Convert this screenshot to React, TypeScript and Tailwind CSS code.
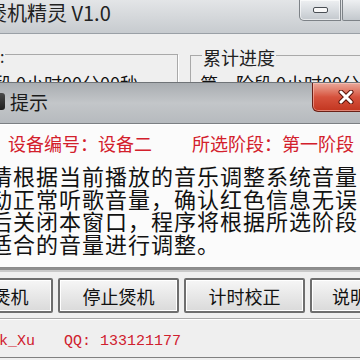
const cjk = "font-['Noto_Sans_CJK_SC','Noto_Sans',sans-serif]"

const MinButton = () => (
  <div className="w-[42px] h-[21px] shrink-0 flex items-center justify-center rounded-bl-[5px] border border-t-0 border-[#7d8287] bg-gradient-to-b from-[#eef0f2] via-[#d9dde1] to-[#c3c8cd] shadow-[inset_0_0_0_1px_rgba(255,255,255,0.6)]">
    <div className="w-[15px] h-[6px] rounded-[2px] border border-[#4a4f55] bg-[#f8f8f8]" />
  </div>
)

const CloseGlyph = () => (
  <svg width="16" height="14" viewBox="0 0 16 14">
    <path d="M3 2 L13 12 M13 2 L3 12" stroke="#5a1208" strokeWidth="5" strokeLinecap="round" />
    <path d="M3 2 L13 12 M13 2 L3 12" stroke="#ffffff" strokeWidth="3" strokeLinecap="round" />
  </svg>
)

const WinButton = ({ label, w = "w-[121px]" }: { label: string; w?: string }) => (
  <div className={`${w} h-[35px] shrink-0 flex items-center justify-center border-2 border-[#6e6e6e] rounded-[2px] bg-gradient-to-b from-[#f6f6f6] to-[#dadada] shadow-[inset_0_0_0_1px_#ffffff] text-[18px] leading-[22px] text-[#111]`}>
    {label}
  </div>
)

const App = () => {
  return (
    <div className={`relative w-[360px] h-[360px] overflow-hidden bg-[#efefef] ${cjk}`}>
      {/* main window */}
      <div className="flex flex-col h-full">
        <div className="h-[34px] shrink-0 flex items-start bg-gradient-to-b from-[#e3e5e7] to-[#c7cbcf] border-b border-[#9aa0a6]">
          <span className="ml-[-13px] mt-[1px] text-[20px] leading-[24px] text-[#222] whitespace-nowrap">煲机精灵 V1.0</span>
          <div className="ml-auto flex gap-[1px] mr-[-24px]">
            <MinButton />
            <div className="w-[42px] h-[21px] shrink-0 rounded-bl-[2px] border border-t-0 border-[#7d8287] bg-gradient-to-b from-[#eef0f2] to-[#c3c8cd]" />
          </div>
        </div>

        <div className="h-[234px] shrink-0 flex items-start">
          <div className="relative mt-[13px] w-[178px] shrink-0">
            <span className="absolute left-[-32px] top-0 text-[16px] leading-[18px] text-[#222]">设置:</span>
            <div className="mt-[7px] ml-[5px] h-[120px] border-t border-r border-[#a9a9a9] shadow-[1px_1px_0_#fff]">
              <div className="ml-[-65px] mt-[17px] text-[18px] leading-[22px] whitespace-nowrap text-[#111]">第一阶段 0小时00分00秒</div>
            </div>
          </div>
          <div className="relative mt-[13px] ml-[12px] flex-1">
            <div className="absolute left-[12px] top-0 bg-[#efefef] px-[1px] text-[18px] leading-[20px] text-[#222]">累计进度</div>
            <div className="mt-[8px] h-[120px] border-t border-l border-[#a9a9a9] mr-[-10px]">
              <div className="ml-[9px] mt-[16px] text-[18px] leading-[22px] whitespace-nowrap text-[#111]">第一阶段 0小时00分00秒</div>
            </div>
          </div>
        </div>

        <div className="h-[4px] shrink-0 border-t-2 border-[#8e8e8e] bg-[#c9c9c9]" />

        <div className="mt-[6px] flex gap-[5px] ml-[-68px]">
          <WinButton label="开始煲机" />
          <WinButton label="停止煲机" />
          <WinButton label="计时校正" />
          <WinButton label="说明" w="w-[80px]" />
        </div>

        <div className="mt-[5px] h-[2px] shrink-0 border-t border-[#a8a8a8] bg-white" />

        <div className="pt-[13px] flex font-['Liberation_Mono',monospace] text-[15px] leading-[18px] text-[#d0202e] whitespace-nowrap">
          <span className="ml-[-1px]">k_Xu</span>
          <span className="ml-[29px]">QQ: 133121177</span>
        </div>
        <div className="mt-[6px] border-t border-[#808080]" />
      </div>

      {/* message box */}
      <div className="absolute left-[-10px] top-[82px] w-[400px] h-[186px] flex flex-col border-b border-[#8a8a8a]">
        <div className="h-[42px] shrink-0 flex items-start bg-gradient-to-b from-[#a9adb1] via-[#c3c6c9] to-[#b6babe] border-t border-[#6f7377] border-b border-b-[#7b7f83]">
          <div className="mt-[10px] ml-[-2px] w-[17px] h-[17px] rounded-[3px] bg-gradient-to-b from-[#4a4a4a] to-[#1e1e1e]" />
          <span className="ml-[5px] mt-[8px] text-[19px] leading-[22px] text-[#1b1b1b]">提示</span>
          <div className="ml-auto mr-[10px] w-[68px] h-[29px] shrink-0 flex items-center justify-center rounded-bl-[6px] border border-t-0 border-[#6a2016] bg-gradient-to-b from-[#e9a89a] via-[#d6523d] to-[#c2351f] shadow-[inset_0_0_0_1px_rgba(255,210,200,0.5)]">
            <CloseGlyph />
          </div>
        </div>
        <div className="flex-1 bg-[#fbfbfb] border-t border-white">
          <div className="pt-[7px] pl-[18px] flex gap-[40px] text-[18px] leading-[22px] text-[#d3202c] whitespace-nowrap">
            <span>设备编号：设备二</span>
            <span>所选阶段：第一阶段</span>
          </div>
          <div className="mt-[10px] text-[22px] leading-[22.5px] tracking-[1px] text-[#111] whitespace-nowrap">
            <div>请根据当前播放的音乐调整系统音量</div>
            <div>动正常听歌音量，确认红色信息无误</div>
            <div>后关闭本窗口，程序将根据所选阶段</div>
            <div>适合的音量进行调整。</div>
          </div>
        </div>
      </div>
    </div>
  )
}

export default App
